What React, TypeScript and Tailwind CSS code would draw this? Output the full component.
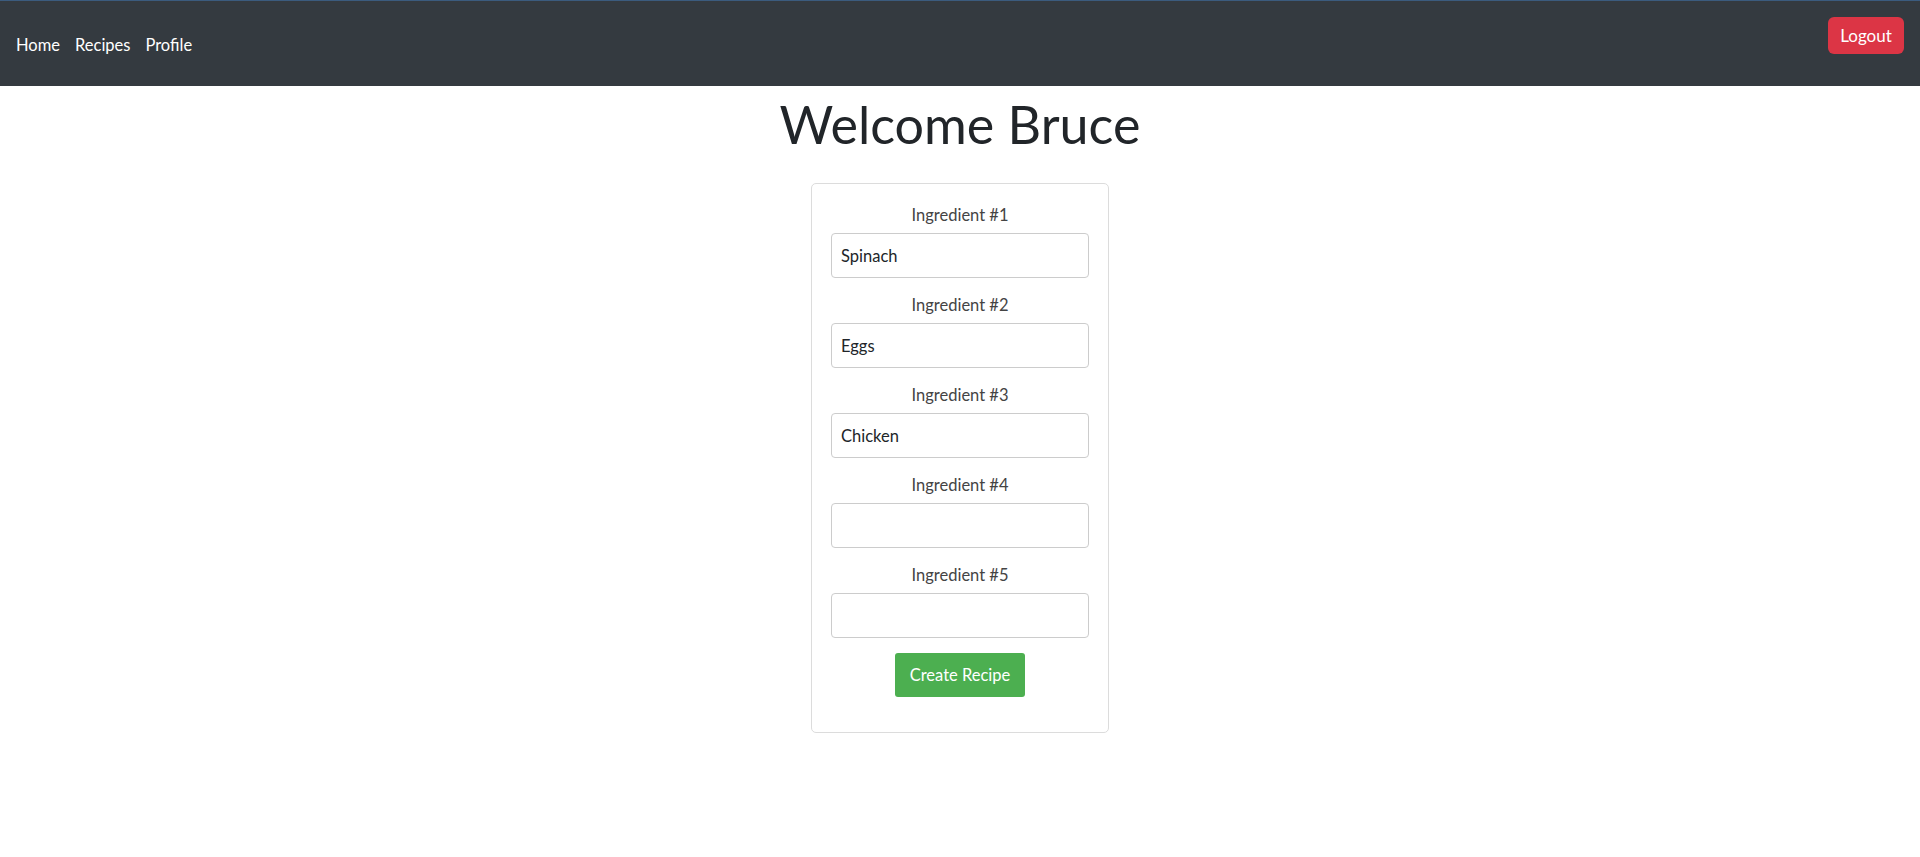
const ingredients = ['Spinach', 'Eggs', 'Chicken', '', ''];

export default function App() {
  return (
    <div className="min-h-[857px] bg-white text-[#212529]" style={{ fontFamily: 'Lato, "Noto Sans", sans-serif' }}>
      {/* Navbar */}
      <nav className="h-[86px] bg-[#343a40] border-t border-[#3b5b7e] flex items-start justify-between pl-4 pr-4">
        <div className="flex gap-[15px] mt-[34px] text-[16.5px] text-white leading-[20px]">
          <a href="#">Home</a>
          <a href="#">Recipes</a>
          <a href="#">Profile</a>
        </div>
        <button className="mt-[16px] h-[37px] w-[76px] rounded-[6px] bg-[#dc3545] text-white text-[17px]">Logout</button>
      </nav>

      <h1 className="text-center text-[52px] leading-[58px] mt-[9px] mb-[30px] font-normal">Welcome Bruce</h1>

      <div className="flex justify-center">
        <div className="w-[298px] border border-[#dcdcdc] rounded-[5px] px-[19px] pt-[19px] pb-[35px] flex flex-col items-center">
          {ingredients.map((v, i) => (
            <div key={i} className="w-full flex flex-col items-center mb-[15px]">
              <label className="text-[16.5px] leading-[24px] text-[#444] mb-[6px]">Ingredient #{i + 1}</label>
              <input
                defaultValue={v}
                className="w-full h-[45px] border border-[#ccc] rounded-[4px] px-[9px] text-[16.5px] text-[#212529] outline-none"
              />
            </div>
          ))}
          <button className="h-[44px] w-[130px] rounded-[3px] bg-[#4caf50] text-white text-[16.5px]">Create Recipe</button>
        </div>
      </div>
    </div>
  );
}
